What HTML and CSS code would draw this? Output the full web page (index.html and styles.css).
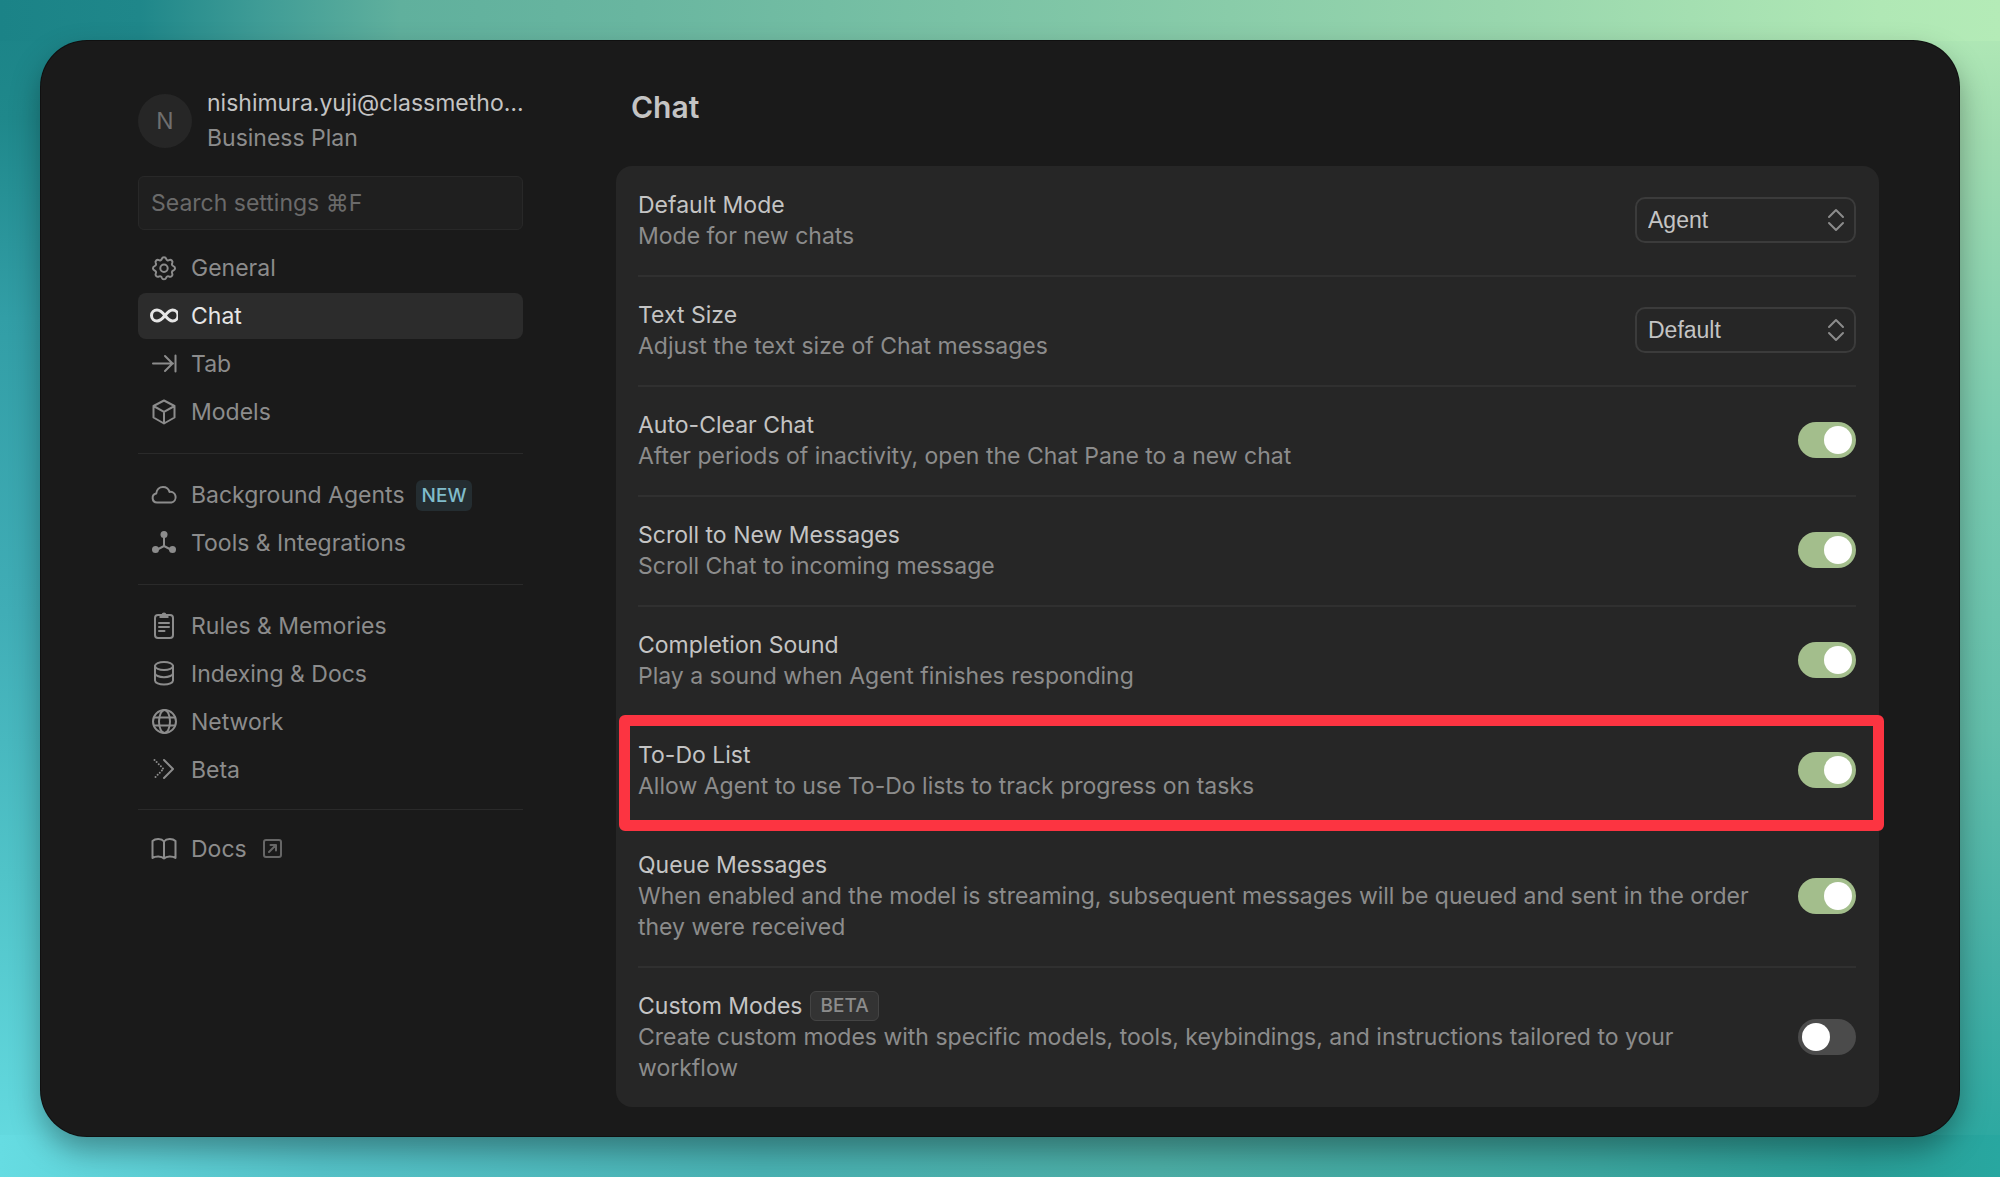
FILE: index.html
```html
<!DOCTYPE html>
<html lang="en">
<head>
<meta charset="utf-8">
<title>Settings – Chat</title>
<link rel="stylesheet" href="styles.css">
</head>
<body>
<div class="window">
  <aside class="sidebar">
    <div class="account">
      <div class="avatar">N</div>
      <div class="account-text">
        <div class="account-name">nishimura.yuji@classmetho…</div>
        <div class="account-plan">Business Plan</div>
      </div>
    </div>
    <input class="search" type="text" placeholder="Search settings ⌘F" aria-label="Search settings">
    <nav class="nav">
      <div class="nav-group">
        <a class="nav-item" href="#general">
          <svg class="icon" viewBox="0 0 28 28"><path d="M11.800 4.900a2.300 2.300 0 0 1 4.400 0c.3 1.300 1.700 1.900 2.900 1.200a2.300 2.300 0 0 1 3.100 3.100c-.7 1.100-.1 2.500 1.200 2.900a2.300 2.300 0 0 1 0 4.400c-1.300.3-1.900 1.700-1.200 2.900a2.300 2.300 0 0 1-3.100 3.100c-1.100-.7-2.500-.1-2.900 1.200a2.300 2.300 0 0 1-4.400 0c-.3-1.300-1.700-1.900-2.900-1.200a2.300 2.300 0 0 1-3.100-3.100c.7-1.100.1-2.500-1.200-2.900a2.300 2.300 0 0 1 0-4.400c1.300-.3 1.900-1.700 1.200-2.900a2.300 2.300 0 0 1 3.100-3.100c1.100.7 2.500.1 2.900-1.200z"/><circle cx="14" cy="14.200" r="3.700"/></svg>
          <span>General</span>
        </a>
        <a class="nav-item active" href="#chat" aria-current="page">
          <svg class="icon bold" viewBox="0 0 28 28"><path d="M15 13.500c-2.500-3.200-4.600-5.500-8-5.500a5.500 5.500 0 0 0 0 11c3.400 0 5.500-2.300 8-5.500s4.600-5.500 7.500-5.500a5.500 5.500 0 0 1 0 11c-2.900 0-5-2.300-7.500-5.500z"/></svg>
          <span>Chat</span>
        </a>
        <a class="nav-item" href="#tab">
          <svg class="icon" viewBox="0 0 28 28"><path d="M3 13.500h20M15 6l7.500 7.500L15 21M25.500 5.500v16"/></svg>
          <span>Tab</span>
        </a>
        <a class="nav-item" href="#models">
          <svg class="icon" viewBox="0 0 28 28"><path d="M14 2.500l10.500 5.500v11.500L14 25.500 3.500 19.500V8zM3.500 8L14 13.800 24.500 8M14 13.800v11.700"/></svg>
          <span>Models</span>
        </a>
      </div>
      <hr class="nav-rule">
      <div class="nav-group">
        <a class="nav-item" href="#background-agents">
          <svg class="icon" viewBox="0 0 28 28"><path d="M7 21.500a4.500 4.500 0 0 1-.8-8.900C6.600 8.600 9.500 6 13 6c3.200 0 5.600 1.900 6.500 4.900a5.400 5.400 0 0 1 2 10.600z"/></svg>
          <span>Background Agents</span><span class="badge badge-new">NEW</span>
        </a>
        <a class="nav-item" href="#tools">
          <svg class="icon" viewBox="0 0 28 28"><path d="M14 6v11M14 17l-8.500 4.500M14 17l8.500 4.500"/><g class="solid"><circle cx="14" cy="5.500" r="3.500"/><circle cx="5.500" cy="20.500" r="3.500"/><circle cx="22.500" cy="20.500" r="3.500"/></g></svg>
          <span>Tools &amp; Integrations</span>
        </a>
      </div>
      <hr class="nav-rule">
      <div class="nav-group">
        <a class="nav-item" href="#rules">
          <svg class="icon" viewBox="0 0 28 28"><rect x="5" y="3" width="18" height="23" rx="3"/><path d="M9 11h10M9 15h10M9 19h5.500"/><path class="solid" d="M9.500 6V2.500h2a2.600 2.600 0 0 1 5 0h2V6z"/></svg>
          <span>Rules &amp; Memories</span>
        </a>
        <a class="nav-item" href="#indexing">
          <svg class="icon" viewBox="0 0 28 28"><ellipse cx="14" cy="6" rx="9" ry="4"/><path d="M5 6v14.500c0 2.200 4 4 9 4s9-1.800 9-4V6M5 13.200c0 2.200 4 4 9 4s9-1.800 9-4"/></svg>
          <span>Indexing &amp; Docs</span>
        </a>
        <a class="nav-item" href="#network">
          <svg class="icon" viewBox="0 0 28 28"><circle cx="14.500" cy="13.500" r="11.500"/><ellipse cx="14.500" cy="13.500" rx="5.500" ry="11.500"/><path d="M4 9.500h21M4 17.500h21"/></svg>
          <span>Network</span>
        </a>
        <a class="nav-item" href="#beta">
          <svg class="icon" viewBox="0 0 28 28"><path d="M14 4l9 9-9 9"/><path class="dotted" d="M4.500 4l9 9-9 9"/></svg>
          <span>Beta</span>
        </a>
      </div>
      <hr class="nav-rule tight">
      <div class="nav-group">
        <a class="nav-item" href="#docs">
          <svg class="icon" viewBox="0 0 28 28"><path d="M14 6.500C11.500 3.200 5.500 3.200 2.500 6v17c3-2.200 9-2.200 11.500.5 2.500-2.700 8.500-2.700 11.500-.5V6C22.500 3.200 16.500 3.200 14 6.500zM14 6.500v17"/></svg>
          <span>Docs</span>
          <svg class="icon-external" viewBox="0 0 20 20"><rect x="1" y="1" width="17" height="17" rx="2"/><path d="M6 13l7-7M7.500 6H13v5.500"/></svg>
        </a>
      </div>
    </nav>
  </aside>

  <main class="content">
    <h1 class="title">Chat</h1>
    <section class="card">
      <div class="row">
        <div class="row-text">
          <label class="row-title" for="mode">Default Mode</label>
          <p class="row-desc">Mode for new chats</p>
        </div>
        <div class="select-wrap">
          <select class="select" id="mode"><option>Agent</option></select>
          <svg class="select-arrows" viewBox="0 0 18 24"><path d="M2 9l7-7 7 7M2 15l7 7 7-7"/></svg>
        </div>
      </div>
      <div class="row">
        <div class="row-text">
          <label class="row-title" for="size">Text Size</label>
          <p class="row-desc">Adjust the text size of Chat messages</p>
        </div>
        <div class="select-wrap">
          <select class="select" id="size"><option>Default</option></select>
          <svg class="select-arrows" viewBox="0 0 18 24"><path d="M2 9l7-7 7 7M2 15l7 7 7-7"/></svg>
        </div>
      </div>
      <div class="row">
        <div class="row-text">
          <label class="row-title" for="autoclear">Auto-Clear Chat</label>
          <p class="row-desc">After periods of inactivity, open the Chat Pane to a new chat</p>
        </div>
        <input class="toggle" type="checkbox" id="autoclear" checked>
      </div>
      <div class="row">
        <div class="row-text">
          <label class="row-title" for="scroll">Scroll to New Messages</label>
          <p class="row-desc">Scroll Chat to incoming message</p>
        </div>
        <input class="toggle" type="checkbox" id="scroll" checked>
      </div>
      <div class="row">
        <div class="row-text">
          <label class="row-title" for="sound">Completion Sound</label>
          <p class="row-desc">Play a sound when Agent finishes responding</p>
        </div>
        <input class="toggle" type="checkbox" id="sound" checked>
      </div>
      <div class="row highlighted">
        <div class="row-text">
          <label class="row-title" for="todo">To-Do List</label>
          <p class="row-desc">Allow Agent to use To-Do lists to track progress on tasks</p>
        </div>
        <input class="toggle" type="checkbox" id="todo" checked>
      </div>
      <div class="row">
        <div class="row-text">
          <label class="row-title" for="queue">Queue Messages</label>
          <p class="row-desc">When enabled and the model is streaming, subsequent messages will be queued and sent in the order they were received</p>
        </div>
        <input class="toggle" type="checkbox" id="queue" checked>
      </div>
      <div class="row">
        <div class="row-text">
          <label class="row-title" for="custom">Custom Modes<span class="badge badge-beta">BETA</span></label>
          <p class="row-desc">Create custom modes with specific models, tools, keybindings, and instructions tailored to your workflow</p>
        </div>
        <input class="toggle" type="checkbox" id="custom">
      </div>
    </section>
  </main>
</div>
</body>
</html>
```
FILE: styles.css
```css
* {
  box-sizing: border-box;
}

body {
  margin: 0;
  min-height: 100vh;
  padding: 41px;
  display: flex;
  font-family: Inter, "Liberation Sans", sans-serif;
  font-size: 23px;
  line-height: 32px;
  color: #c4c4c4;
  /* One gradient for each side of the backdrop: top, bottom, left, right */
  background:
    linear-gradient(to right, #1b8387, #1f878a 7%, #3f9c96 13%, #60b09d 20%, #69b6a0 32%, #7ac2a5 48%, #98d6ad 75%, #b0e8b5 94%, #b4ebb7) top / 100% 41px no-repeat,
    linear-gradient(to right, #66dce2, #55c3c9 16%, #49b2b3 38%, #4caea6 58%, #3ba69f 80%, #2a9f98 93%, #28a7a0) bottom / 100% 42px no-repeat,
    linear-gradient(#1b8387, #1f888b 10%, #329ea6 27%, #40adb6 52%, #50c3c8 74%, #66dce2) left / 50% 100% no-repeat,
    linear-gradient(#b4ebb7, #a0dcb0 12%, #79cbb0 38%, #63bfab 62%, #45b0a6 82%, #28a7a0) right / 50% 100% no-repeat;
}

.window {
  flex: 1;
  min-width: 0;
  display: flex;
  gap: 93px;
  padding: 43px 80px 29px 97px;
  border-radius: 46px;
  background: #1a1a1a;
  box-shadow: 0 0 0 1px #101010, 0 14px 30px rgba(0, 0, 0, 0.35);
}

/* Sidebar */

.sidebar {
  flex: 0 0 385px;
  min-width: 0;
  padding-top: 2px;
}

.account {
  display: flex;
  align-items: center;
  gap: 15px;
  margin-bottom: 20px;
}

.avatar {
  flex: none;
  width: 54px;
  height: 54px;
  border-radius: 50%;
  background: #262626;
  color: #6f6f6f;
  line-height: 54px;
  text-align: center;
}

.account-text {
  min-width: 0;
  line-height: 35px;
}

.account-name {
  white-space: nowrap;
}

.account-plan {
  color: #8c8c8c;
}

.search {
  display: block;
  width: 100%;
  height: 54px;
  margin-bottom: 15px;
  padding: 0 12px;
  border: 1px solid #282828;
  border-radius: 6px;
  background: #1f1f1f;
  color: #c4c4c4;
  font: inherit;
}

.search::placeholder {
  color: #6a6a6a;
  opacity: 1;
}

.nav-group {
  display: flex;
  flex-direction: column;
  gap: 2px;
}

.nav-item {
  display: flex;
  align-items: center;
  height: 46px;
  padding: 0 12px;
  border-radius: 8px;
  color: #8c8c8c;
  text-decoration: none;
  white-space: nowrap;
}

.nav-item.active {
  background: #2c2c2c;
  color: #e6e6e6;
}

.icon {
  flex: none;
  width: 28px;
  height: 28px;
  margin-right: 13px;
}

.icon,
.icon-external,
.select-arrows {
  fill: none;
  stroke: currentColor;
  stroke-width: 2;
  stroke-linecap: round;
  stroke-linejoin: round;
}

.icon.bold {
  stroke-width: 3;
}

.icon .solid {
  fill: currentColor;
  stroke: none;
}

.icon .dotted {
  stroke-dasharray: 0 3;
}

.icon-external {
  width: 20px;
  height: 20px;
  margin-left: 16px;
  color: #666;
}

.nav-rule {
  height: 1px;
  margin: 18px 0;
  border: 0;
  background: #2a2a2a;
}

.nav-rule.tight {
  margin: 16px 0;
}

.badge {
  border-radius: 6px;
  font-size: 19px;
  font-weight: 500;
}

.badge-new {
  margin-left: 11px;
  padding: 0 6px;
  line-height: 31px;
  background: #242d31;
  color: #80bccb;
}

.badge-beta {
  margin-left: 8px;
  padding: 0 9px;
  border: 1px solid #444;
  line-height: 28px;
  background: #333;
  color: #8c8c8c;
}

/* Content */

.content {
  flex: 1;
  min-width: 0;
}

.title {
  margin: 0 0 38px;
  padding: 4px 15px 2px;
  font-size: 30px;
  line-height: 38px;
  font-weight: 600;
}

.card {
  padding: 1px 23px 0 22px;
  border-radius: 16px;
  background: #262626;
}

.row {
  position: relative;
  display: flex;
  align-items: center;
  justify-content: space-between;
  gap: 44px;
  padding: 21px 0 23px;
  border-bottom: 2px solid #303030;
}

.row:last-child {
  border-bottom: 0;
}

.row-title {
  display: flex;
  align-items: center;
  height: 33px;
}

.row-desc {
  margin: 0;
  line-height: 31px;
  color: #8c8c8c;
}

/* Attention frame, reaching past the card's edges */
.highlighted::after {
  content: "";
  position: absolute;
  inset: -2px -28px -6px -19px;
  border: 11px solid #fc3441;
  border-radius: 6px;
  pointer-events: none;
}

.select-wrap {
  position: relative;
  flex: 0 0 221px;
}

.select {
  display: block;
  width: 100%;
  height: 46px;
  padding: 0 11px;
  border: 2px solid #3b3b3b;
  border-radius: 10px;
  appearance: none;
  background: transparent;
  color: #c4c4c4;
  font: 23px "Liberation Sans", sans-serif;
}

.select-arrows {
  position: absolute;
  top: 11px;
  right: 11px;
  width: 18px;
  height: 24px;
  color: #8c8c8c;
  pointer-events: none;
}

.toggle {
  flex: none;
  width: 58px;
  height: 36px;
  margin: 0;
  padding: 4px;
  display: flex;
  appearance: none;
  border-radius: 18px;
  background: #4b4b4b;
}

.toggle::before {
  content: "";
  width: 28px;
  height: 28px;
  border-radius: 50%;
  background: #fff;
}

.toggle:checked {
  justify-content: flex-end;
  background: #a3be8c;
}
```
